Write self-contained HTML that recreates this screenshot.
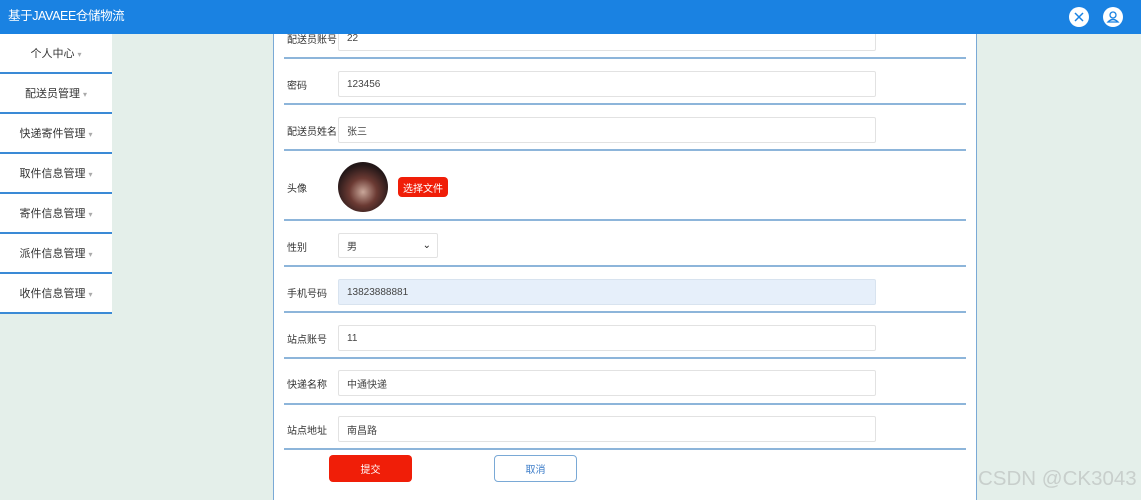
<!DOCTYPE html>
<html><head><meta charset="utf-8"><style>
*{box-sizing:border-box;margin:0;padding:0}
body{width:1141px;height:500px;overflow:hidden;background:#e4efea;font-family:"Liberation Sans","Noto Sans CJK SC",sans-serif;position:relative}
.hd{position:absolute;z-index:5;left:0;top:0;width:1141px;height:34px;background:#1a82e2;color:#fff;font-size:12.5px;line-height:32px;padding-left:8px;letter-spacing:-0.4px}
.ic{position:absolute;top:7px;width:20px;height:20px;border-radius:50%;background:#fff}
.sb{position:absolute;left:0;top:34px;width:112px;height:280px;background:#fff}
.sb div{height:40px;border-bottom:2px solid #3a8ad6;text-align:center;line-height:40px;font-size:11px;color:#333}
.sb span{color:#aaa;font-size:8px}
.pn{position:absolute;left:273px;top:34px;width:704px;height:466px;background:#fff;border-left:1px solid #7aa9d6;border-right:1px solid #7aa9d6}
.ln{position:absolute;left:284px;width:682px;height:2px;background:#8db5da}
.lb{position:absolute;left:287px;font-size:10px;color:#333;height:26px;display:flex;align-items:center}
.in{position:absolute;left:338px;width:538px;height:26px;border:1px solid #e2e2e2;border-radius:2px;font-size:10px;color:#444;display:flex;align-items:center;padding-left:8px;background:#fff}
.btn{position:absolute;top:455px;height:27px;border-radius:4px;font-size:10px;display:flex;align-items:center;justify-content:center}
</style></head><body>
<div class="hd">基于JAVAEE仓储物流</div>
<div class="ic" style="left:1069px;z-index:6"><svg width="20" height="20" viewBox="0 0 20 20"><path d="M6 6l8 8M14 6l-8 8" stroke="#1a82e2" stroke-width="1.5"/></svg></div>
<div class="ic" style="left:1103px;z-index:6"><svg width="20" height="20" viewBox="0 0 20 20"><circle cx="10" cy="8" r="3" fill="none" stroke="#1a82e2" stroke-width="1.3"/><path d="M5 15q5-5 10 0z" fill="none" stroke="#1a82e2" stroke-width="1.3"/></svg></div>
<div class="sb"><div>个人中心 <span>▾</span></div><div>配送员管理 <span>▾</span></div><div>快递寄件管理 <span>▾</span></div><div>取件信息管理 <span>▾</span></div><div>寄件信息管理 <span>▾</span></div><div>派件信息管理 <span>▾</span></div><div>收件信息管理 <span>▾</span></div></div>
<div class="pn"></div>
<div class="in" style="top:25px">22</div><div class="lb" style="top:25px">配送员账号</div>
<div class="ln" style="top:57px"></div>
<div class="lb" style="top:71px">密码</div><div class="in" style="top:71px">123456</div>
<div class="ln" style="top:103px"></div>
<div class="lb" style="top:117px">配送员姓名</div><div class="in" style="top:117px">张三</div>
<div class="ln" style="top:149px"></div>
<div class="lb" style="top:174px">头像</div>
<div style="position:absolute;left:338px;top:162px;width:50px;height:50px;border-radius:50%;background:radial-gradient(circle at 50% 60%,#c9a79a 0,#6b3a33 35%,#231718 70%)"></div>
<div style="position:absolute;left:398px;top:177px;width:50px;height:20px;border-radius:4px;background:#f01e08;color:#fff;font-size:10px;display:flex;align-items:center;justify-content:center">选择文件</div>
<div class="ln" style="top:219px"></div>
<div class="lb" style="top:233px">性别</div><div class="in" style="top:233px;width:100px;height:25px">男<span style="position:absolute;right:6px;font-size:10px;color:#222">⌄</span></div>
<div class="ln" style="top:265px"></div>
<div class="lb" style="top:279px">手机号码</div><div class="in" style="top:279px;background:#e6effa;border-color:#d8e3ef">13823888881</div>
<div class="ln" style="top:311px"></div>
<div class="lb" style="top:325px">站点账号</div><div class="in" style="top:325px">11</div>
<div class="ln" style="top:357px"></div>
<div class="lb" style="top:370px">快递名称</div><div class="in" style="top:370px">中通快递</div>
<div class="ln" style="top:403px"></div>
<div class="lb" style="top:416px">站点地址</div><div class="in" style="top:416px">南昌路</div>
<div class="ln" style="top:448px"></div>
<div class="btn" style="left:329px;width:83px;background:#f01e08;color:#fff">提交</div>
<div class="btn" style="left:494px;width:83px;border:1.5px solid #7aa9d6;color:#3a7bc8;background:#fff">取消</div>
<div style="position:absolute;left:978px;top:467px;font-size:20.5px;color:#c8cfcc;white-space:nowrap">CSDN @CK3043</div>
</body></html>
